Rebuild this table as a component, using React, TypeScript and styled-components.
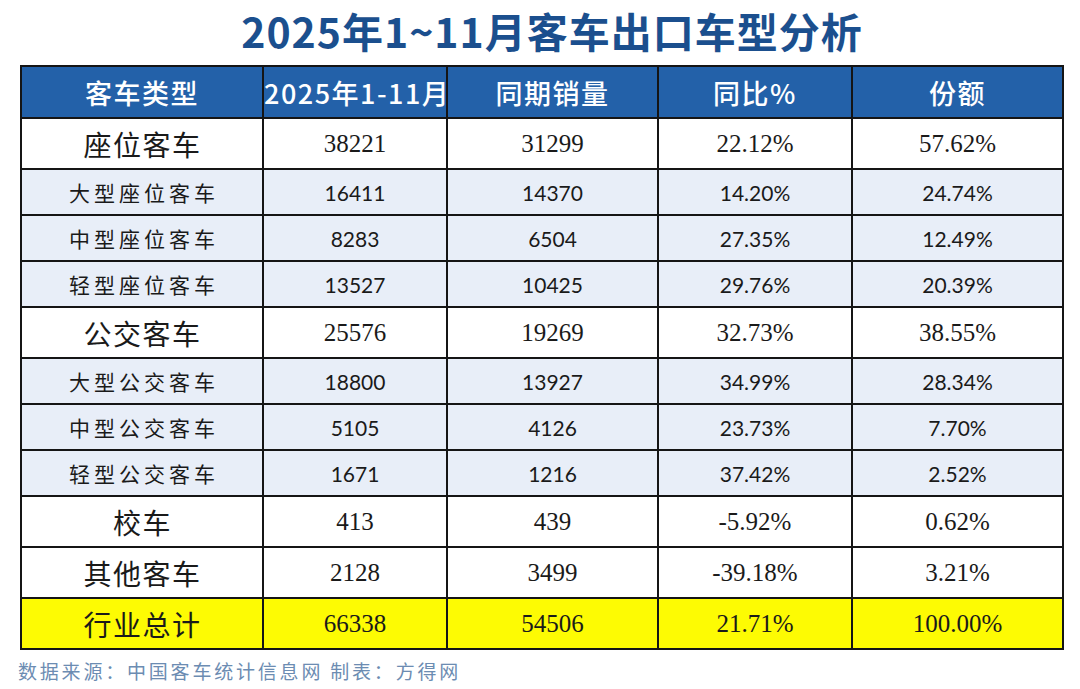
import React from "react";
import styled, { createGlobalStyle } from "styled-components";

const GlobalStyle = createGlobalStyle`
  html, body { margin: 0; padding: 0; background: #ffffff; }
  body { font-family: "Noto Sans CJK SC", "Noto Sans", sans-serif; }
`;

const Page = styled.div`
  width: 1080px;
  height: 689px;
  box-sizing: border-box;
  padding: 0 18px 0 20px;
  display: flex;
  flex-direction: column;
  align-items: stretch;
`;

const Title = styled.h1`
  margin: 4px 0 0 0;
  padding-left: 22px;
  height: 61px;
  font-family: "Noto Sans CJK SC", "Noto Sans", sans-serif;
  font-weight: 600;
  font-size: 41px;
  line-height: 52px;
  color: #1b4f8e;
  text-align: center;
  letter-spacing: 1px;
`;

const Table = styled.table`
  width: 1042px;
  border-collapse: collapse;
  table-layout: fixed;
  border: 2px solid #151515;
`;

type RowKind = "major" | "sub" | "total";

const HeadCell = styled.th`
  height: 50px;
  padding: 0;
  background: #2361a9;
  color: #ffffff;
  border: 2px solid #151515;
  font-family: "Noto Sans CJK SC", "Noto Sans", sans-serif;
  font-weight: 500;
  font-size: 27px;
  text-align: center;
  vertical-align: middle;
  white-space: nowrap;
  letter-spacing: 1.5px;
`;

const Row = styled.tr<{ $kind: RowKind }>`
  height: ${(p) => (p.$kind === "sub" ? 46 : 51)}px;
  background: ${(p) =>
    p.$kind === "sub" ? "#e8eef8" : p.$kind === "total" ? "#fdfb03" : "#ffffff"};
`;

const NameCell = styled.td<{ $kind: RowKind }>`
  padding: 0;
  border: 2px solid #151515;
  text-align: center;
  vertical-align: middle;
  color: #1a1a1a;
  font-family: "Noto Sans CJK SC", sans-serif;
  font-weight: 400;
  font-size: ${(p) => (p.$kind === "sub" ? 21 : 28)}px;
  letter-spacing: ${(p) => (p.$kind === "sub" ? "4px" : "1.5px")};
  padding-left: ${(p) => (p.$kind === "sub" ? "4px" : "1px")};
`;

const NumCell = styled.td<{ $kind: RowKind }>`
  padding: 0;
  border: 2px solid #151515;
  text-align: center;
  vertical-align: middle;
  color: #1a1a1a;
  font-family: ${(p) =>
    p.$kind === "sub" ? '"Lato", "Open Sans", sans-serif' : '"Liberation Serif", "DejaVu Serif", serif'};
  font-size: ${(p) => (p.$kind === "sub" ? 21 : 25)}px;
`;

const Footer = styled.div`
  margin-top: 8px;
  margin-left: -2px;
  font-family: "Noto Sans CJK SC", sans-serif;
  font-size: 19px;
  line-height: 26px;
  color: #6c8cb2;
  letter-spacing: 2.8px;
  white-space: pre;
`;

const columns = ["客车类型", "2025年1-11月", "同期销量", "同比%", "份额"];
const widths = [242, 184, 211, 194, 211];

type Item = { name: string; kind: RowKind; v: [string, string, string, string] };

const rows: Item[] = [
  { name: "座位客车", kind: "major", v: ["38221", "31299", "22.12%", "57.62%"] },
  { name: "大型座位客车", kind: "sub", v: ["16411", "14370", "14.20%", "24.74%"] },
  { name: "中型座位客车", kind: "sub", v: ["8283", "6504", "27.35%", "12.49%"] },
  { name: "轻型座位客车", kind: "sub", v: ["13527", "10425", "29.76%", "20.39%"] },
  { name: "公交客车", kind: "major", v: ["25576", "19269", "32.73%", "38.55%"] },
  { name: "大型公交客车", kind: "sub", v: ["18800", "13927", "34.99%", "28.34%"] },
  { name: "中型公交客车", kind: "sub", v: ["5105", "4126", "23.73%", "7.70%"] },
  { name: "轻型公交客车", kind: "sub", v: ["1671", "1216", "37.42%", "2.52%"] },
  { name: "校车", kind: "major", v: ["413", "439", "-5.92%", "0.62%"] },
  { name: "其他客车", kind: "major", v: ["2128", "3499", "-39.18%", "3.21%"] },
  { name: "行业总计", kind: "total", v: ["66338", "54506", "21.71%", "100.00%"] },
];

export default function App() {
  return (
    <>
      <GlobalStyle />
      <Page>
        <Title>2025年1~11月客车出口车型分析</Title>
        <Table>
          <colgroup>
            {widths.map((w, i) => (
              <col key={i} style={{ width: w }} />
            ))}
          </colgroup>
          <thead>
            <tr>
              {columns.map((c) => (
                <HeadCell key={c}>{c}</HeadCell>
              ))}
            </tr>
          </thead>
          <tbody>
            {rows.map((r) => (
              <Row key={r.name} $kind={r.kind}>
                <NameCell $kind={r.kind}>{r.name}</NameCell>
                {r.v.map((x, i) => (
                  <NumCell key={i} $kind={r.kind}>
                    {x}
                  </NumCell>
                ))}
              </Row>
            ))}
          </tbody>
        </Table>
        <Footer>{"数据来源：中国客车统计信息网 制表：方得网"}</Footer>
      </Page>
    </>
  );
}
